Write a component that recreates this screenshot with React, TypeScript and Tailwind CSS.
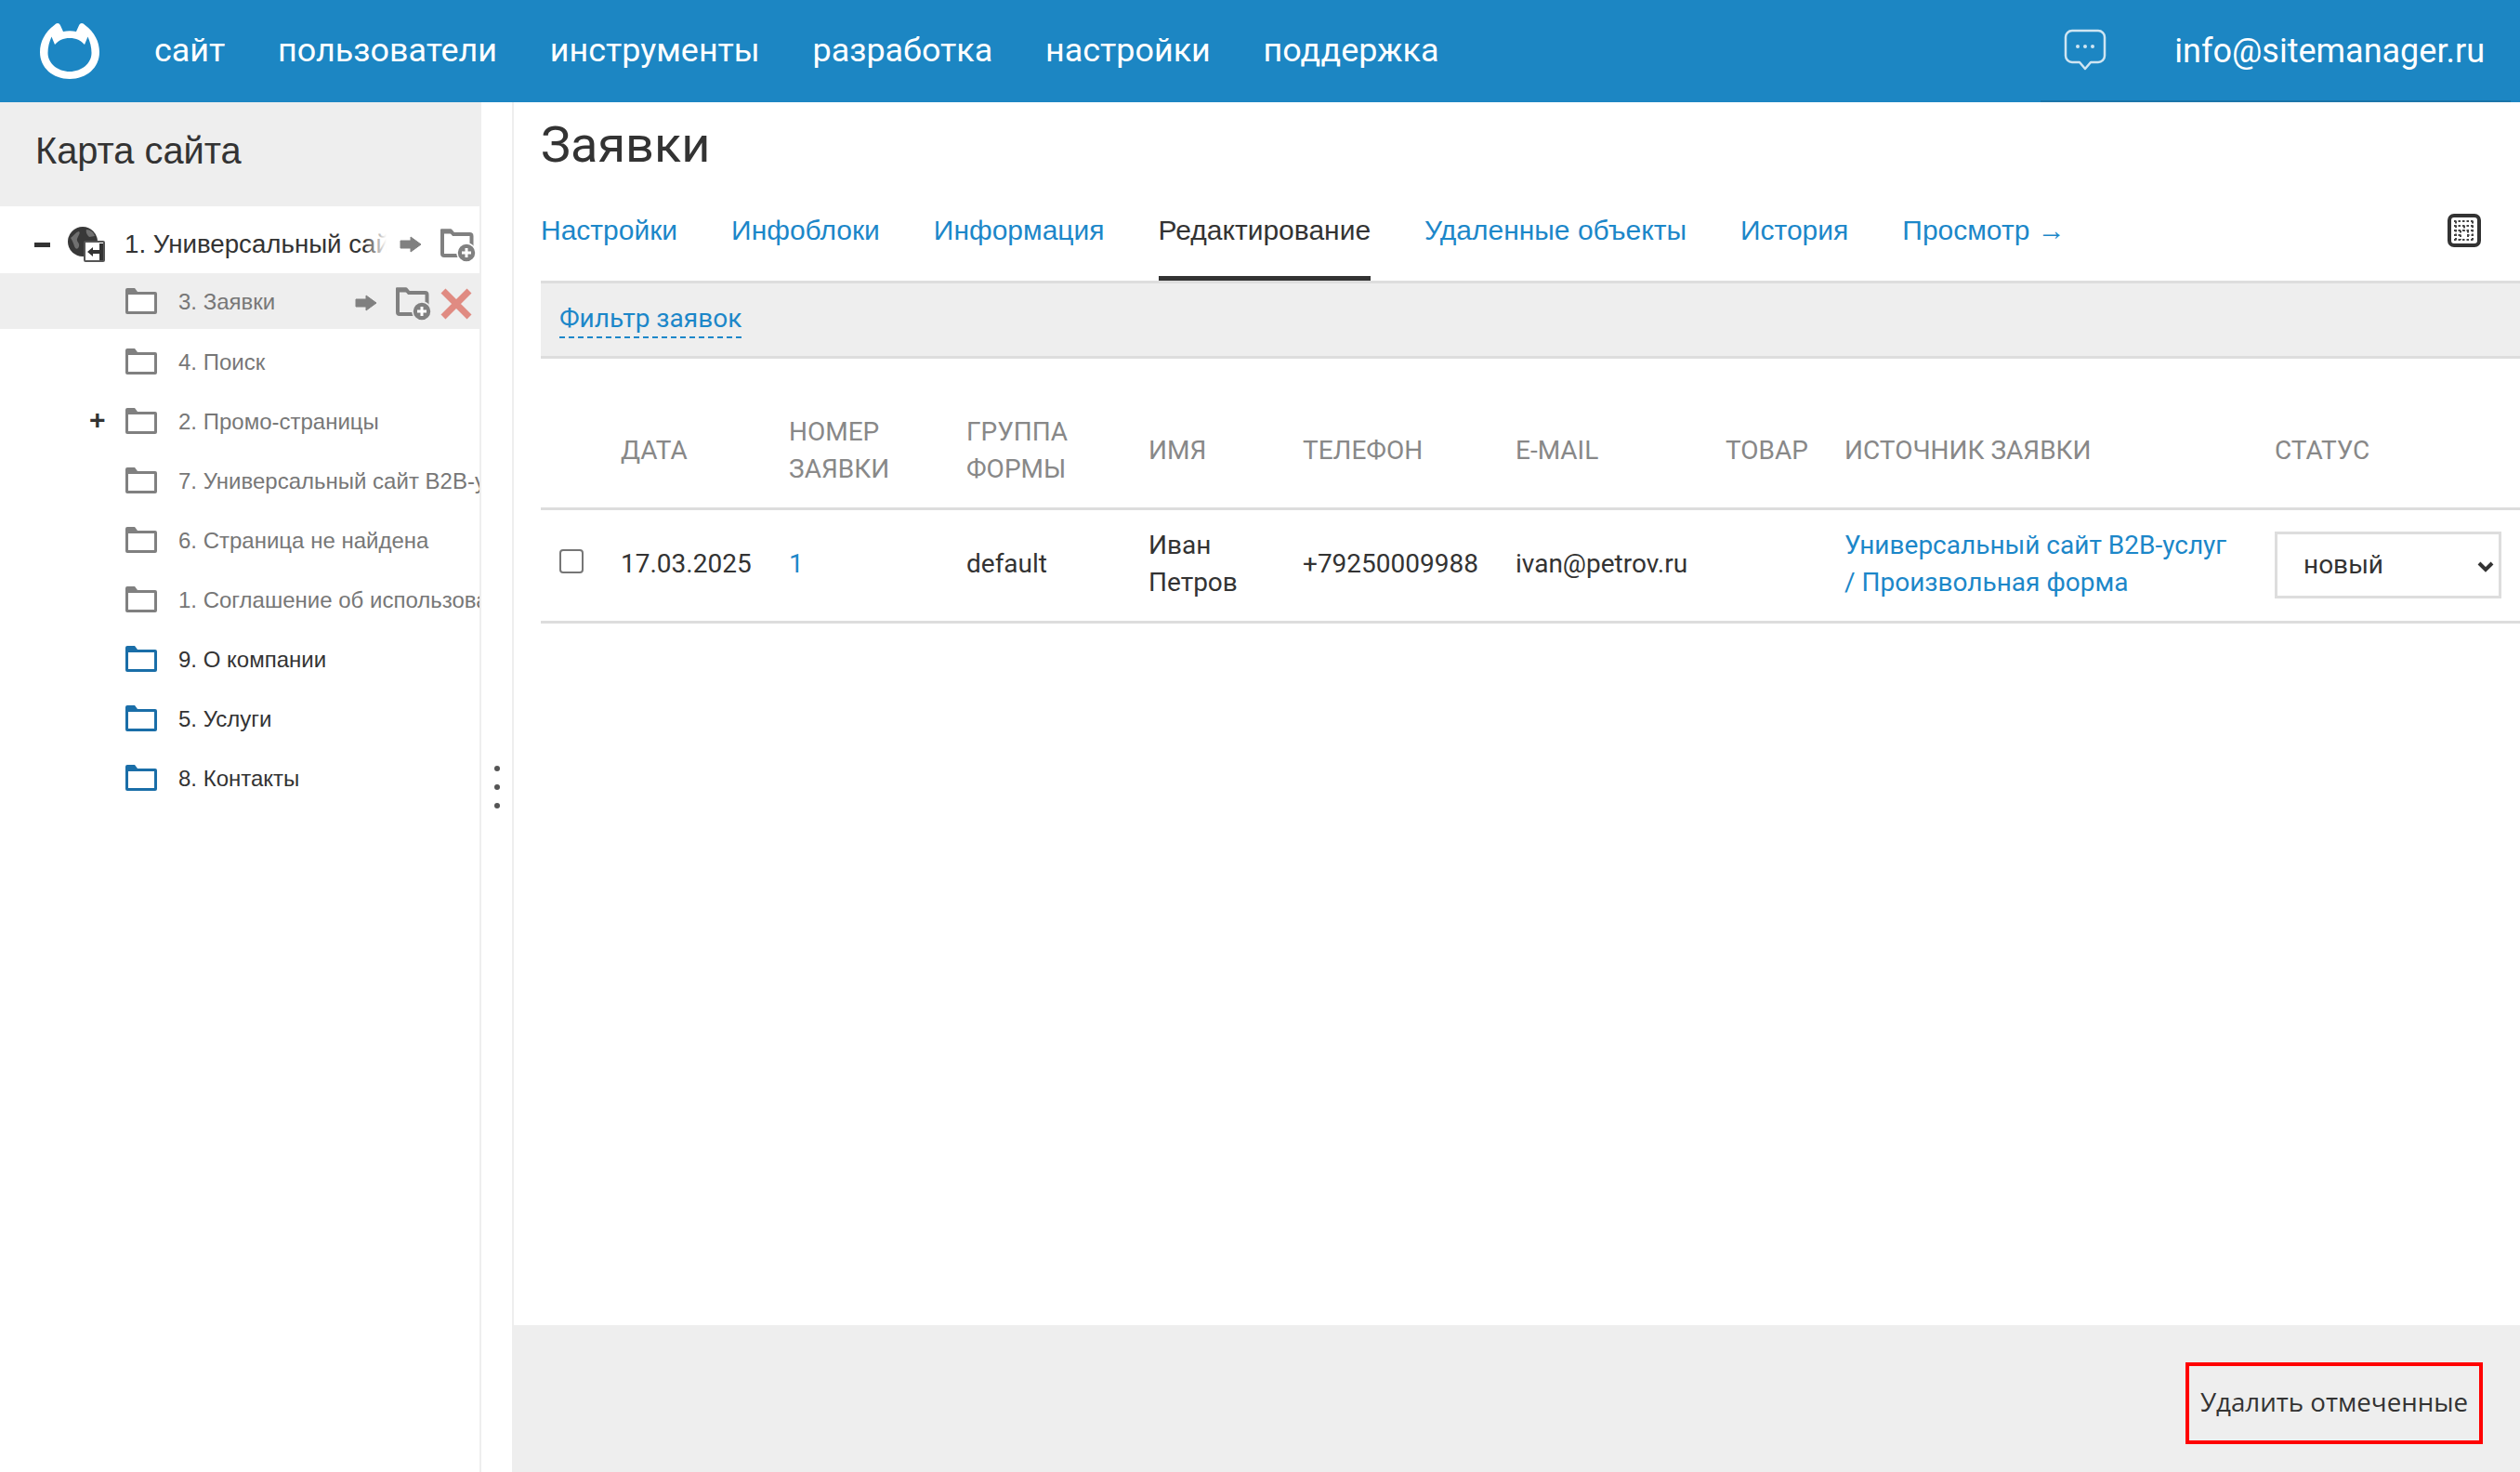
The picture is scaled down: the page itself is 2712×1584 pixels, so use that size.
import React from 'react';

const navItems = ['сайт', 'пользователи', 'инструменты', 'разработка', 'настройки', 'поддержка'];
const tabs = ['Настройки', 'Инфоблоки', 'Информация', 'Редактирование', 'Удаленные объекты', 'История', 'Просмотр →'];

const treeItems = [
  { label: '4. Поиск', active: false, plus: false },
  { label: '2. Промо-страницы', active: false, plus: true },
  { label: '7. Универсальный сайт B2B-услуг', active: false, plus: false },
  { label: '6. Страница не найдена', active: false, plus: false },
  { label: '1. Соглашение об использовании', active: false, plus: false },
  { label: '9. О компании', active: true, plus: false },
  { label: '5. Услуги', active: true, plus: false },
  { label: '8. Контакты', active: true, plus: false },
];

const Logo = () => (
  <svg width="66" height="62" viewBox="0 0 66 62" className="shrink-0">
    <path
      fillRule="evenodd"
      fill="#fff"
      d="M20 1c1.500 0 2.500 1 3.300 3L26 10c2.200-.5 4.500-.7 7-.7s4.800.2 7 .7L42.700 4c.8-2 1.800-3 3.300-3 1.300 0 2.300.8 3.500 2C60 11 65 21 65 32c0 17-14 29-32 29S1 49 1 32C1 21 6 11 16.500 3 17.700 1.800 18.700 1 20 1zM33 17c-7 0-12 2.500-16 7L13.500 15.500C11 21 9.500 27 9.500 33c0 11 10.500 20 23.500 20s23.500-9 23.500-20c0-6-1.500-12-4-17.500L49 24c-4-4.500-9-7-16-7z"
    />
  </svg>
);

const FolderIcon = ({ color }: { color: string }) => (
  <svg width="36" height="30" viewBox="0 0 36 30" className="shrink-0">
    <path d="M1 3a2 2 0 0 1 2-2h8l3 4h19a2 2 0 0 1 2 2v20a2 2 0 0 1-2 2H3a2 2 0 0 1-2-2z" fill={color} />
    <rect x="4" y="8" width="28" height="18" fill="#fff" />
  </svg>
);

const FolderPlus = ({ bg }: { bg: string }) => (
  <svg width="40" height="37" viewBox="0 0 40 37" className="shrink-0">
    <path
      d="M2 3.500h9l3 3.500h17.500a2 2 0 0 1 2 2V28a2 2 0 0 1-2 2H4a2 2 0 0 1-2-2z"
      fill="none"
      stroke="#808080"
      strokeWidth="4"
    />
    <path d="M1 1.500h10l3.500 5H1z" fill="#808080" />
    <circle cx="28" cy="27" r="10" fill="#808080" stroke={bg} strokeWidth="1.500" />
    <path d="M28 22v10M23 27h10" stroke="#fff" strokeWidth="3" />
  </svg>
);

const Arrow = () => (
  <svg width="24" height="18" viewBox="0 0 24 18" className="shrink-0">
    <path d="M1 5h11V1l11 8-11 8v-4H1z" fill="#808080" strokeLinejoin="round" stroke="#808080" strokeWidth="1" />
  </svg>
);

const GlobeIcon = () => (
  <svg width="40" height="38" viewBox="0 0 40 38" className="shrink-0">
    <circle cx="16" cy="16" r="16" fill="#383838" />
    <path d="M3 12c3-2 5-6 9-7 2 2-1 5-2 8s3 4 2 8-4 3-5 0-2-6-4-9zM20 3c4 0 8 3 9 7l-6 1c-2-2-4-5-3-8z" fill="#707070" />
    <rect x="18" y="16" width="21" height="21" rx="1" fill="#fff" stroke="#555" strokeWidth="2" />
    <rect x="34" y="18" width="4" height="18" fill="#333" />
    <path d="M21 27l6-5v3h7v4h-7v3z" fill="#333" />
  </svg>
);

const GridIcon = () => (
  <svg width="36" height="36" viewBox="0 0 36 36" className="shrink-0">
    <rect x="2" y="2" width="32" height="32" rx="5" fill="#fff" stroke="#333" strokeWidth="4" />
    <path
      d="M7 8h22M7 13h22M7 18h22M7 23h8M21 23h8M7 28h22M9 8v20M14 18v10M18 13v6M22 18v10M27 8v20"
      stroke="#444"
      strokeWidth="2"
      strokeDasharray="2.500 2"
      fill="none"
    />
  </svg>
);

const ChatIcon = () => (
  <svg width="46" height="46" viewBox="0 0 46 46" className="mb-[2px] shrink-0">
    <path
      d="M9 2h28a7 7 0 0 1 7 7v20a7 7 0 0 1-7 7h-8l-6 7-6-7H9a7 7 0 0 1-7-7V9a7 7 0 0 1 7-7z"
      fill="none"
      stroke="#cfe5f2"
      strokeWidth="2.500"
      strokeLinejoin="round"
    />
    <circle cx="15" cy="19" r="2" fill="#cfe5f2" />
    <circle cx="23" cy="19" r="2" fill="#cfe5f2" />
    <circle cx="31" cy="19" r="2" fill="#cfe5f2" />
  </svg>
);

const Header = () => (
  <header className="relative flex h-[110px] shrink-0 items-center bg-[#1c86c3] pl-[42px] pr-[38px] text-white">
    <Logo />
    <nav className="ml-[58px] flex gap-[56.800px] text-[35.900px]">
      {navItems.map((item) => (
        <span key={item}>{item}</span>
      ))}
    </nav>
    <div className="ml-auto flex items-center gap-[73px]">
      <ChatIcon />
      <span className="text-[36px]">info@sitemanager.ru</span>
    </div>
    <div className="absolute bottom-0 left-[2196px] h-[2px] w-[506px] bg-[#1a75a9]" />
  </header>
);

const Sidebar = () => (
  <aside className="flex w-[518px] shrink-0 flex-col overflow-hidden border-r-2 border-[#eeeeee] bg-white font-['Liberation_Sans',sans-serif]">
    <div className="flex h-[112px] shrink-0 items-center bg-[#eeeeee] pb-[6px] pl-[38px] text-[39.800px] text-[#333333]">Карта сайта</div>
    <div className="flex h-[72px] shrink-0 items-center pt-[10px]">
      <div className="ml-[37px] h-[5px] w-[17px] bg-[#333333]" />
      <div className="ml-[19px]">
        <GlobeIcon />
      </div>
      <div className="relative ml-[21px] w-[282px] overflow-hidden whitespace-nowrap text-[27.700px] text-[#333333]">
        1. Универсальный сайт B2B-услуг
        <div className="absolute inset-y-0 right-0 w-[24px] bg-gradient-to-r from-transparent to-white" />
      </div>
      <div className="ml-[14px]">
        <Arrow />
      </div>
      <div className="ml-[20px]">
        <FolderPlus bg="#ffffff" />
      </div>
    </div>
    <div className="flex h-[60px] shrink-0 items-center bg-[#eeeeee] pl-[134px]">
      <FolderIcon color="#808080" />
      <span className="ml-[22px] w-[190px] shrink-0 pt-[2px] text-[24px] text-[#777777]">3. Заявки</span>
      <div className="pt-[3px]">
        <Arrow />
      </div>
      <div className="ml-[20px] pt-[4px]">
        <FolderPlus bg="#eeeeee" />
      </div>
      <svg width="34" height="34" viewBox="0 0 34 34" className="ml-[8px] mt-[5px] shrink-0">
        <path d="M3 3l28 28M31 3L3 31" stroke="#e08b82" strokeWidth="7" />
      </svg>
    </div>
    <div className="pt-[3px]">
      {treeItems.map((item) => (
        <div key={item.label} className="relative flex h-[64px] items-center whitespace-nowrap pl-[134px]">
          {item.plus && <span className="absolute left-[96px] top-[14px] text-[30px] font-bold leading-[34px] text-[#333333]">+</span>}
          <FolderIcon color={item.active ? '#1a6ea8' : '#808080'} />
          <span className={`ml-[22px] pt-[2px] text-[24px] ${item.active ? 'text-[#333333]' : 'text-[#777777]'}`}>{item.label}</span>
        </div>
      ))}
    </div>
  </aside>
);

const th = 'px-[20px] pt-[38px] text-left align-middle text-[28px] font-normal uppercase leading-[40px] text-[#888888]';
const td = 'px-[20px] pb-[3px] align-middle text-[28px] leading-[40px] text-[#333333]';
const tdLink = 'px-[20px] pb-[3px] align-middle text-[28px] leading-[40px] text-[#1c87c9]';

const RequestsTable = () => (
  <table className="w-full table-fixed border-collapse">
    <colgroup>
      <col className="w-[66px]" />
      <col className="w-[181px]" />
      <col className="w-[191px]" />
      <col className="w-[196px]" />
      <col className="w-[166px]" />
      <col className="w-[229px]" />
      <col className="w-[226px]" />
      <col className="w-[128px]" />
      <col className="w-[463px]" />
      <col />
    </colgroup>
    <thead>
      <tr className="h-[161px] border-b-[3px] border-[#dddddd]">
        <th />
        <th className={th}>Дата</th>
        <th className={th}>Номер заявки</th>
        <th className={th}>Группа формы</th>
        <th className={th}>Имя</th>
        <th className={th}>Телефон</th>
        <th className={th}>E-mail</th>
        <th className={th}>Товар</th>
        <th className={th}>Источник заявки</th>
        <th className={th}>Статус</th>
      </tr>
    </thead>
    <tbody>
      <tr className="h-[122px] border-b-[3px] border-[#dddddd]">
        <td className="pl-[20px] align-middle">
          <input type="checkbox" className="mb-[8px] block h-[26px] w-[26px] appearance-none rounded-[4px] border-2 border-[#767676] bg-white" />
        </td>
        <td className={td}>17.03.2025</td>
        <td className={tdLink}>1</td>
        <td className={td}>default</td>
        <td className={td}>Иван Петров</td>
        <td className={td}>+79250009988</td>
        <td className={td}>ivan@petrov.ru</td>
        <td className={td} />
        <td className={tdLink}>Универсальный сайт B2B-услуг / Произвольная форма</td>
        <td className="pl-[20px] pr-[20px] align-middle">
          <div className="relative h-[72px] w-[244px]">
            <select className="h-full w-full appearance-none border-[3px] border-[#dddddd] bg-white pl-[28px] text-[28px] text-[#333333]">
              <option>новый</option>
            </select>
            <svg width="18" height="12" viewBox="0 0 18 12" className="absolute right-[8px] top-[32px]">
              <path d="M2 2l7 7 7-7" fill="none" stroke="#333" strokeWidth="4" />
            </svg>
          </div>
        </td>
      </tr>
    </tbody>
  </table>
);

const Main = () => (
  <main className="flex min-w-0 flex-1 flex-col border-l-2 border-[#eeeeee]">
    <div className="flex-1 pl-[29px]">
      <h1 className="flex h-[90px] items-center text-[54px] font-normal text-[#333333]">Заявки</h1>
      <div className="flex h-[105px] items-stretch gap-[58px] border-b-[3px] border-[#dddddd] pr-[42px] font-['Liberation_Sans',sans-serif] text-[30px] text-[#1c87c9]">
        {tabs.map((tab) => (
          <span
            key={tab}
            className={
              tab === 'Редактирование'
                ? 'flex items-center border-b-[5px] border-[#333333] pb-[2px] text-[#333333]'
                : 'flex items-center border-b-[5px] border-transparent pb-[2px]'
            }
          >
            {tab}
          </span>
        ))}
        <div className="ml-auto flex items-center pb-[6px]">
          <GridIcon />
        </div>
      </div>
      <div className="flex h-[81px] items-center border-b-[3px] border-[#dddddd] bg-[#eeeeee] pl-[20px]">
        <span className="border-b-2 border-dashed border-[#1c87c9] text-[28px] leading-[38px] text-[#1c87c9]">Фильтр заявок</span>
      </div>
      <RequestsTable />
    </div>
    <div className="flex h-[158px] shrink-0 items-center justify-end bg-[#eeeeee] pr-[40px] pt-[10px]">
      <button className="flex h-[88px] w-[320px] items-center justify-center border-4 border-[#ff0000] pb-[2px] font-['Open_Sans',sans-serif] text-[27.700px] text-[#333333]">
        Удалить отмеченные
      </button>
    </div>
  </main>
);

export default function App() {
  return (
    <div className="flex h-[1584px] w-[2712px] flex-col overflow-hidden bg-white font-['Roboto',sans-serif]">
      <Header />
      <div className="flex min-h-0 flex-1">
        <Sidebar />
        <div className="flex w-[33px] shrink-0 flex-col items-center justify-center gap-[14px]">
          <div className="h-[6px] w-[6px] rounded-full bg-[#555555]" />
          <div className="h-[6px] w-[6px] rounded-full bg-[#555555]" />
          <div className="h-[6px] w-[6px] rounded-full bg-[#555555]" />
        </div>
        <Main />
      </div>
    </div>
  );
}
